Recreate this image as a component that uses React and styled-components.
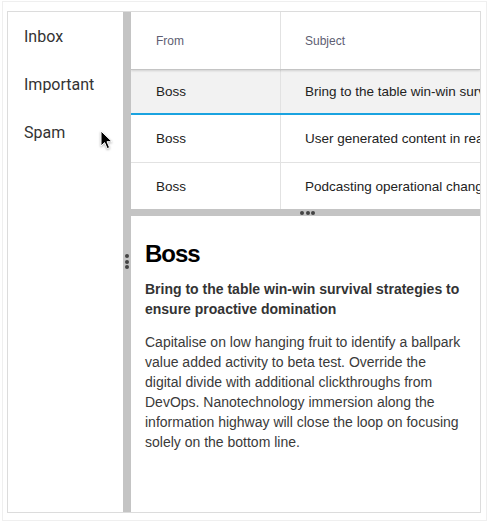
import React from "react";
import styled, { createGlobalStyle } from "styled-components";

const GlobalStyle = createGlobalStyle`
  html, body {
    margin: 0;
    padding: 0;
    background: #ffffff;
  }
  * {
    box-sizing: border-box;
  }
`;

const folders = ["Inbox", "Important", "Spam"];

const messages = [
  {
    id: 0,
    from: "Boss",
    subject: "Bring to the table win-win survival strategies to ensure proactive domination",
    selected: true,
    height: 43,
  },
  {
    id: 1,
    from: "Boss",
    subject: "User generated content in real-time will have multiple touchpoints",
    height: 47,
  },
  {
    id: 2,
    from: "Boss",
    subject: "Podcasting operational change management inside of workflows",
    height: 46,
  },
];

const App = () => {
  const current = messages[0];

  return (
    <Page>
      <GlobalStyle />
      <Outer>
        <Frame>
          <Sidebar>
            {folders.map((folder) => (
              <Folder key={folder}>{folder}</Folder>
            ))}
          </Sidebar>
          <VSplit>
            <Dots vertical>
              <Dot />
              <Dot />
              <Dot />
            </Dots>
          </VSplit>
          <Main>
            <Table>
              <HeadRow>
                <FromCell head>From</FromCell>
                <SubjectCell head>Subject</SubjectCell>
              </HeadRow>
              {messages.map((m) => (
                <Row key={m.id} selected={m.selected} rowHeight={m.height}>
                  <FromCell>{m.from}</FromCell>
                  <SubjectCell>{m.subject}</SubjectCell>
                </Row>
              ))}
            </Table>
            <HSplit>
              <Dots>
                <Dot />
                <Dot />
                <Dot />
              </Dots>
            </HSplit>
            <Detail>
              <Sender>{current.from}</Sender>
              <Subject>{current.subject}</Subject>
              <Body>
                Capitalise on low hanging fruit to identify a ballpark value
                added activity to beta test. Override the digital divide with
                additional clickthroughs from DevOps. Nanotechnology immersion
                along the information highway will close the loop on focusing
                solely on the bottom line.
              </Body>
            </Detail>
          </Main>
          <Cursor width="14" height="21" viewBox="0 0 14 21">
            <path
              d="M1 1 L1 16 L4.6 12.6 L7.2 18.6 L9.6 17.6 L7 11.7 L12 11.7 Z"
              fill="#000"
              stroke="#fff"
              strokeWidth="1"
              strokeLinejoin="round"
            />
          </Cursor>
        </Frame>
      </Outer>
    </Page>
  );
};

const Page = styled.div`
  width: 488px;
  height: 522px;
  padding: 1px 1px 1px 2px;
`;

const Outer = styled.div`
  height: 520px;
  width: 485px;
  border: 1px solid #efefef;
  padding: 9px 0 0 4px;
`;

const Frame = styled.div`
  position: relative;
  display: flex;
  width: 474px;
  height: 502px;
  border: 1px solid #dcdcdc;
  background: #ffffff;
`;

const Sidebar = styled.nav`
  width: 115px;
  flex-shrink: 0;
  display: flex;
  flex-direction: column;
`;

const Folder = styled.div`
  height: 48px;
  display: flex;
  align-items: center;
  padding-left: 16px;
  font-family: Roboto, "Liberation Sans", sans-serif;
  font-size: 16px;
  color: #333333;
`;

const VSplit = styled.div`
  position: relative;
  width: 8px;
  flex-shrink: 0;
  background: #c4c4c4;
  display: flex;
  justify-content: center;
  padding-top: 242px;
`;

const HSplit = styled.div`
  height: 7px;
  flex-shrink: 0;
  background: #c4c4c4;
  display: flex;
  align-items: center;
  justify-content: center;
  padding-left: 4px;
`;

const Dots = styled.div`
  display: flex;
  flex-direction: ${(props) => (props.vertical ? "column" : "row")};
  gap: 1.5px;
  height: fit-content;
`;

const Dot = styled.span`
  width: 4px;
  height: 4px;
  border-radius: 50%;
  background: #444444;
`;

const Main = styled.div`
  flex: 1;
  min-width: 0;
  display: flex;
  flex-direction: column;
  overflow: hidden;
`;

const Table = styled.div`
  display: flex;
  flex-direction: column;
  font-family: "Liberation Sans", Arial, sans-serif;
`;

const HeadRow = styled.div`
  position: relative;
  display: flex;
  height: 58px;
  border-bottom: 1px solid #c4c4c4;
  box-shadow: 0 1px 2px rgba(0, 0, 0, 0.14);
  z-index: 1;
`;

const Row = styled.div`
  display: flex;
  height: ${(props) => props.rowHeight + (props.selected ? 2 : 1)}px;
  background: ${(props) => (props.selected ? "#f2f2f2" : "#ffffff")};
  border-bottom: ${(props) =>
    props.selected ? "2px solid #1aa3e0" : "1px solid #e2e2e2"};

  &:last-child {
    border-bottom: none;
    height: ${(props) => props.rowHeight}px;
  }
`;

const FromCell = styled.div`
  width: 150px;
  flex-shrink: 0;
  display: flex;
  align-items: center;
  padding-left: 25px;
  border-right: 1px solid #e2e2e2;
  font-size: ${(props) => (props.head ? "12px" : "13.5px")};
  color: ${(props) => (props.head ? "#5e5e72" : "#222222")};
`;

const SubjectCell = styled.div`
  flex: 1;
  min-width: 0;
  display: flex;
  align-items: center;
  padding-left: 24px;
  white-space: nowrap;
  overflow: hidden;
  font-size: ${(props) => (props.head ? "12px" : "13.5px")};
  color: ${(props) => (props.head ? "#5e5e72" : "#222222")};
`;

const Detail = styled.div`
  flex: 1;
  padding: 24px 14px 0 14px;
  font-family: "Liberation Sans", Arial, sans-serif;
`;

const Sender = styled.h1`
  margin: 0;
  font-size: 24px;
  line-height: 28px;
  font-weight: 700;
  letter-spacing: -1px;
  color: #000000;
`;

const Subject = styled.h2`
  margin: 11px 0 0;
  font-size: 14px;
  line-height: 20px;
  font-weight: 700;
  color: #333333;
`;

const Body = styled.p`
  margin: 13px 0 0;
  font-size: 14px;
  line-height: 20px;
  color: #3a3a3a;
`;

const Cursor = styled.svg`
  position: absolute;
  left: 92px;
  top: 118px;
  filter: drop-shadow(0 1px 1px rgba(0, 0, 0, 0.3));
`;

export default App;
